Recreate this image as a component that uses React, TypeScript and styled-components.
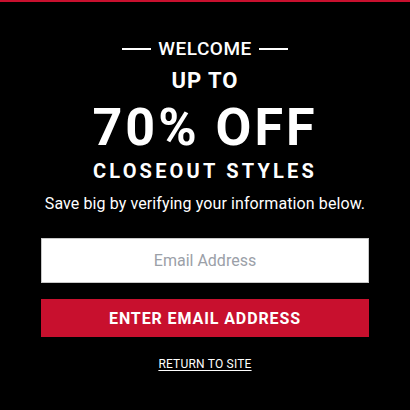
import styled, { createGlobalStyle } from "styled-components";

const GlobalStyle = createGlobalStyle`
  html, body {
    margin: 0;
    padding: 0;
    background: #000;
  }
  body {
    font-family: Roboto, "Liberation Sans", sans-serif;
  }
`;

const Modal = styled.div`
  width: 410px;
  height: 410px;
  box-sizing: border-box;
  background: #000;
  border-top: 2px solid #c8102e;
  display: flex;
  flex-direction: column;
  align-items: center;
  color: #fff;
`;

const Eyebrow = styled.div`
  margin-top: 35px;
  display: flex;
  align-items: center;
  gap: 7px;
  font-size: 19px;
  font-weight: 500;
  letter-spacing: 0.5px;
  line-height: 24px;
`;

const Rule = styled.span`
  display: block;
  width: 29px;
  height: 2px;
  background: #fff;
`;

interface HeadingProps {
  size: string;
  spacing?: string;
  gap: string;
}

const Heading = styled.div<HeadingProps>`
  margin-top: ${(p) => p.gap};
  font-size: ${(p) => p.size};
  font-weight: 700;
  line-height: 1;
  letter-spacing: ${(p) => p.spacing ?? "0"};
  text-transform: uppercase;
`;

const Subtitle = styled.p`
  margin: 13px 0 0;
  font-size: 16px;
  line-height: 20px;
  letter-spacing: 0.1px;
`;

const Form = styled.form`
  margin-top: 24px;
  width: 328px;
  display: flex;
  flex-direction: column;
  gap: 16px;
`;

const EmailInput = styled.input`
  box-sizing: border-box;
  width: 100%;
  height: 45px;
  border: 1px solid #c8c8c8;
  background: #fff;
  text-align: center;
  font-family: inherit;
  font-size: 16px;
  outline: none;
  &::placeholder {
    color: #9ba0a8;
  }
`;

const SubmitButton = styled.button`
  height: 38px;
  border: none;
  background: #c8102e;
  color: #fff;
  font-family: inherit;
  font-size: 16px;
  font-weight: 700;
  letter-spacing: 0.9px;
  cursor: pointer;
`;

const ReturnLink = styled.a`
  margin-top: 20px;
  color: #fff;
  font-size: 12px;
  letter-spacing: 0.2px;
  text-decoration: underline;
  text-underline-offset: 2px;
`;

export default function App() {
  return (
    <>
      <GlobalStyle />
      <Modal>
        <Eyebrow>
          <Rule />
          WELCOME
          <Rule />
        </Eyebrow>
        <Heading size="22px" spacing="1px" gap="9px">
          Up to
        </Heading>
        <Heading size="52px" spacing="3px" gap="10px">
          70% Off
        </Heading>
        <Heading size="20px" spacing="3.2px" gap="7px">
          Closeout Styles
        </Heading>
        <Subtitle>Save big by verifying your information below.</Subtitle>
        <Form onSubmit={(e) => e.preventDefault()}>
          <EmailInput type="email" placeholder="Email Address" />
          <SubmitButton type="submit">ENTER EMAIL ADDRESS</SubmitButton>
        </Form>
        <ReturnLink href="#">RETURN TO SITE</ReturnLink>
      </Modal>
    </>
  );
}
